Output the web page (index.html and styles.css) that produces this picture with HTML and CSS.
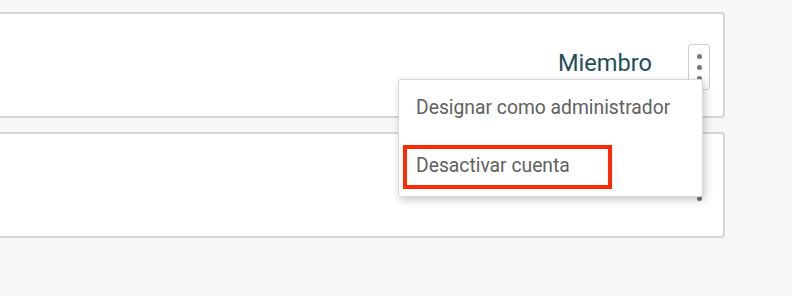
FILE: index.html
```html
<!DOCTYPE html>
<html lang="es">
<head>
    <meta charset="UTF-8">
    <title>Miembros</title>
    <link rel="stylesheet" href="styles.css">
</head>
<body>

<div class="members">
    <div class="member">
        <span class="role">Miembro</span>
        <div class="actions">
            <button class="kebab active" aria-label="Más opciones">
                <span></span><span></span><span></span>
            </button>
            <div class="dropdown">
                <div class="dropdown-item">Designar como administrador</div>
                <div class="dropdown-item highlighted">Desactivar cuenta</div>
            </div>
        </div>
    </div>
    <div class="member">
        <span class="role">Miembro</span>
        <div class="actions">
            <button class="kebab" aria-label="Más opciones">
                <span></span><span></span><span></span>
            </button>
        </div>
    </div>
</div>

</body>
</html>
```

FILE: styles.css
```css
body {
    font-family: Roboto, "Liberation Sans", sans-serif;
    margin: 0;
    padding: 0;
    background-color: #f6f7f7;
}

.members {
    display: flex;
    flex-direction: column;
    gap: 14px;
    padding-top: 12px;
    margin-left: -20px;
    width: 745px;
}

.member {
    height: 102px;
    background-color: #fff;
    border: 2px solid #d6d6d6;
    border-radius: 4px;
    display: flex;
    align-items: center;
    justify-content: flex-end;
    padding-right: 13px;
    box-sizing: content-box;
}

.role {
    font-size: 23.6px;
    color: #1f4d58;
    margin-right: 36px;
    margin-top: -5px;
}

.actions {
    position: relative;
}

.kebab {
    width: 22px;
    height: 46px;
    padding: 0;
    background: transparent;
    border: 1px solid transparent;
    border-radius: 3px;
    display: flex;
    flex-direction: column;
    align-items: center;
    justify-content: center;
    gap: 6px;
    margin-top: 4px;
}

.kebab.active {
    border-color: #cfcfcf;
}

.kebab span {
    width: 5px;
    height: 5px;
    border-radius: 50%;
    background-color: #777;
}

.dropdown {
    position: absolute;
    top: 39px;
    right: 7px;
    width: 303px;
    background-color: #fff;
    border: 1px solid #d8d8d8;
    border-radius: 3px;
    box-shadow: 2px 3px 8px rgba(0, 0, 0, 0.22);
    z-index: 2;
}

.dropdown-item {
    height: 58px;
    display: flex;
    align-items: center;
    padding-left: 17px;
    padding-bottom: 4px;
    box-sizing: border-box;
    font-size: 19.3px;
    color: #606060;
    position: relative;
}

.highlighted::after {
    content: "";
    position: absolute;
    left: 4px;
    top: 7px;
    width: 201px;
    height: 36px;
    border: 4px solid #ff2a00;
}
```
